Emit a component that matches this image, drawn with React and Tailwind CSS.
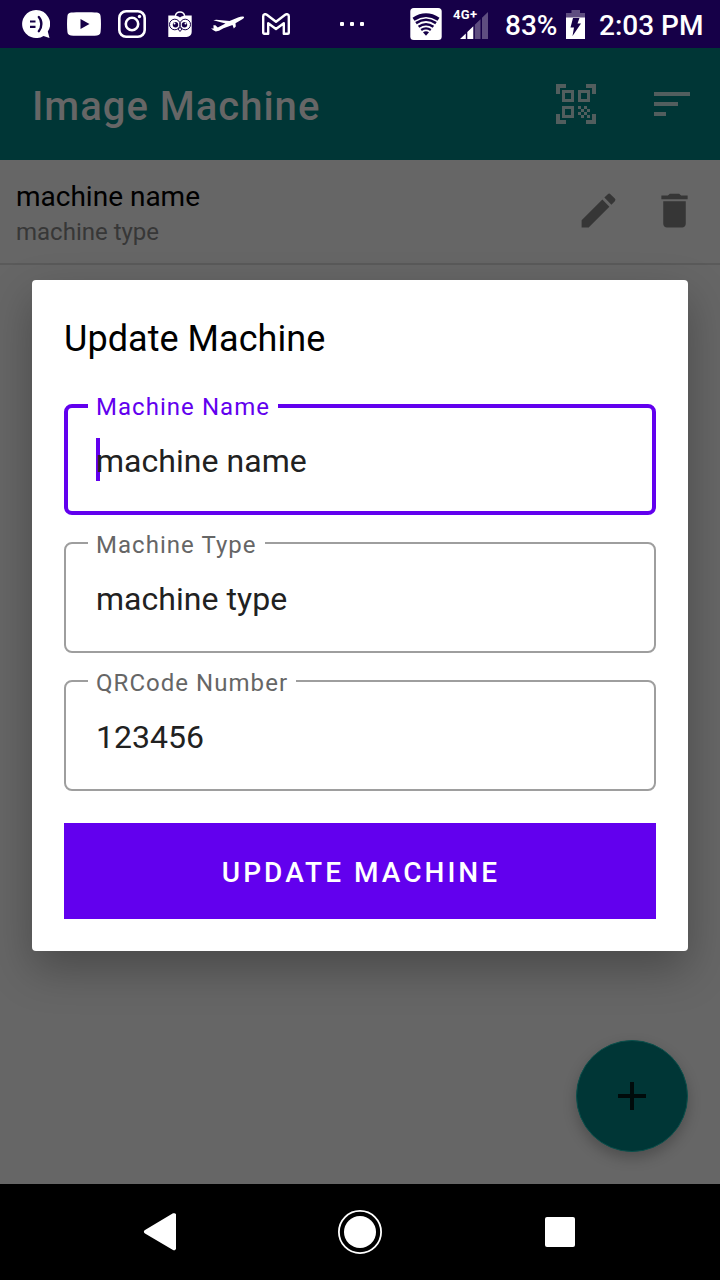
import React from "react";

const FaceIcon = () => (
  <svg width="28" height="28" viewBox="0 0 28 28">
    <path d="M14 0a14 14 0 1 0 7.500 25.900L27.500 28l-1.700-6.400A14 14 0 0 0 14 0z" fill="#fff" />
    <path d="M8 11.500h5.500M8 16.800h5.500" stroke="#160048" strokeWidth="2.200" />
    <path d="M16.800 7c3.400 3.600 3.400 10.400 0 14.200" stroke="#160048" strokeWidth="2.400" fill="none" strokeLinecap="round" />
  </svg>
);

const VideoIcon = () => (
  <svg width="34" height="24" viewBox="0 0 34 24">
    <path d="M4 .6C9 0 25 0 30 .6c2.500.3 3.400 1.600 3.600 3.700.500 5 .500 10.400 0 15.400-.2 2.100-1.100 3.400-3.600 3.700-5 .6-21 .6-26 0C1.500 23.100.600 21.800.400 19.700c-.5-5-.5-10.400 0-15.400C.600 2.200 1.500.900 4 .6z" fill="#fff" />
    <path d="M13.500 7v10l9-5z" fill="#160048" />
  </svg>
);

const CameraIcon = () => (
  <svg width="28" height="28" viewBox="0 0 28 28" fill="none" stroke="#fff" strokeWidth="2.600">
    <rect x="1.300" y="1.300" width="25.400" height="25.400" rx="6.800" />
    <circle cx="14" cy="14" r="6.200" />
    <circle cx="21.500" cy="6.500" r="1.700" fill="#fff" stroke="none" />
  </svg>
);

const OwlIcon = () => (
  <svg width="24" height="28" viewBox="0 0 24 28">
    <path d="M7.300 6a4.800 5 0 0 1 9.400 0" fill="none" stroke="#fff" strokeWidth="1.400" />
    <path d="M.3 5.500h6C9 5.500 11 6.500 12 7.500c1-1 3-2 5.700-2h6v16.500a5 5 0 0 1-5 5H.3z" fill="#fff" />
    <g fill="none" stroke="#160048" strokeWidth="1">
      <circle cx="6.800" cy="14.500" r="5.300" />
      <circle cx="17.200" cy="14.500" r="5.300" />
      <path d="M10 19l2-1.500 2 1.500-2 2.500z" />
    </g>
    <circle cx="7.500" cy="14.800" r="2.700" fill="#160048" />
    <circle cx="16.500" cy="14.800" r="2.700" fill="#160048" />
    <circle cx="6.500" cy="13.500" r="1" fill="#fff" />
    <circle cx="17.500" cy="13.500" r="1" fill="#fff" />
  </svg>
);

const PlaneIcon = () => (
  <svg width="34" height="16" viewBox="0 0 34 16" fill="#fff">
    <path d="M33 .9c.5.900-1.200 2.200-3 3L24.500 7.200l.3 3.300-2 2-1.300-3.500-9 3.300-4.500 2.500-3.200.7-2-.9-2.800-2.200 2.600.200-.2-3.300h2l2.400 2.300L14.500 7.500 2.300 4.200l3-.5L18.500 5 27 1.500C29.500.500 32 .100 33 .9z" />
  </svg>
);

const MailIcon = () => (
  <svg width="28" height="22" viewBox="0 0 28 22" fill="none" stroke="#fff" strokeWidth="2.400" strokeLinejoin="round">
    <path d="M1.200 3.200C1.200 1.300 3.200.600 4.800 1.800L14 8.800l9.200-7c1.600-1.200 3.600-.5 3.600 1.400V19.800a1 1 0 0 1-1 1h-4V10.200L14 16l-7.800-5.800v10.600h-4a1 1 0 0 1-1-1z" />
  </svg>
);

const WifiIcon = () => (
  <svg width="32" height="32" viewBox="0 0 32 32">
    <rect x=".3" width="31.400" height="32" rx="3.500" fill="#fff" />
    <g fill="none" stroke="#160048">
      <path d="M3.500 11.200Q16 3.200 28.500 11.200" strokeWidth="3.600" />
      <path d="M6 15.200q10-6.800 20 0" strokeWidth="2.600" />
      <path d="M8.600 18.800q7.400-5.200 14.800 0" strokeWidth="2.500" />
      <path d="M11.200 22q4.800-3.400 9.600 0" strokeWidth="2.200" />
    </g>
    <path d="M13 24.300q3-2 6 0L16 27.700z" fill="#160048" />
  </svg>
);

const SignalIcon = () => (
  <svg width="28" height="27" viewBox="0 0 28 27">
    <path d="M0 27 5.800 21.400V27zM7.300 20l6-5.800V27h-6z" fill="#fff" />
    <path d="M14.800 12.800l5.700-5.600V27h-5.700zM22 5.800 28 0v27h-6z" fill="#5e4d80" />
  </svg>
);

const BatteryIcon = () => (
  <svg width="19" height="29" viewBox="0 0 19 29">
    <path d="M0 3h5.500V0h8.500v3h5v5H0z" fill="#5e4d80" />
    <path d="M0 7.500h19V29H0z" fill="#fff" />
    <path d="M7 8h6.500L11.500 13.500H15L6.500 26l1.500-8.500H4.500z" fill="#160048" />
  </svg>
);

const StatusBar = () => (
  <div className="flex h-12 items-center bg-[#160048] pl-3 text-white">
    {[FaceIcon, VideoIcon, CameraIcon, OwlIcon, PlaneIcon, MailIcon].map((Icon, i) => (
      <div key={i} className="flex w-12 justify-center">
        <Icon />
      </div>
    ))}
    <div className="ml-10 flex w-6 gap-1.5">
      <span className="size-1 rounded-[1px] bg-white" />
      <span className="size-1 rounded-[1px] bg-white" />
      <span className="size-1 rounded-[1px] bg-white" />
    </div>
    <div className="ml-[46px]">
      <WifiIcon />
    </div>
    <div className="relative ml-[18px] mt-0.5">
      <span className="absolute -left-[7px] -top-[4px] text-[13px] leading-[14px] font-bold tracking-[0.4px]">4G+</span>
      <SignalIcon />
    </div>
    <span className="ml-[17px] w-[53px] whitespace-nowrap pt-1 text-[28px] leading-8 font-medium">83%</span>
    <div className="ml-[8px]">
      <BatteryIcon />
    </div>
    <span className="ml-[14px] whitespace-nowrap pt-1 text-[28px] leading-8 font-medium">2:03 PM</span>
  </div>
);

const AppBar = () => (
  <header className="flex h-28 items-center bg-[#003636] pl-8 pr-6">
    <h1 className="flex-1 pt-1.5 text-[40px] leading-[48px] font-medium tracking-[1px] text-[#666666]">Image Machine</h1>
    <svg className="size-12 fill-[#525e5e]" viewBox="0 0 24 24">
      <path d="M9.500,6.500v3h-3v-3H9.500 M11,5H5v6h6V5L11,5z M9.500,14.500v3h-3v-3H9.500 M11,13H5v6h6V13L11,13z M17.500,6.500v3h-3v-3H17.500 M19,5h-6v6h6V5L19,5z M13,13h1.500v1.500H13V13z M14.500,14.500H16V16h-1.500V14.500z M16,13h1.500v1.500H16V13z M13,16h1.500v1.500H13V16z M14.500,17.500H16V19h-1.500V17.500z M16,16h1.500v1.500H16V16z M17.500,14.500H19V16h-1.500V14.500z M17.500,17.500H19V19h-1.500V17.500z M22,7h-2V4h-3V2h5V7z M22,22v-5h-2v3h-3v2H22z M2,22h5v-2H4v-3H2V22z M2,2v5h2V4h3V2H2z" />
    </svg>
    <svg className="ml-12 size-12 fill-[#525e5e]" viewBox="0 0 24 24">
      <path d="M3 18h6v-2H3v2zM3 6v2h18V6H3zm0 7h12v-2H3v2z" />
    </svg>
  </header>
);

const MachineRow = () => (
  <div className="flex h-[105px] items-center border-b-2 border-[#5a5a5a] pl-4 pr-[23.500px]">
    <div className="flex-1 pt-1">
      <p className="text-[28px] leading-9 text-black">machine name</p>
      <p className="text-[24px] leading-[34px] text-[#373737]">machine type</p>
    </div>
    <svg className="-mt-[2px] size-[45px] fill-[#363636]" viewBox="0 0 24 24">
      <path d="M3 17.250V21h3.750L17.810 9.940l-3.750-3.750L3 17.250zM20.710 7.040a1 1 0 0 0 0-1.410l-2.340-2.340a1 1 0 0 0-1.410 0l-1.830 1.830 3.750 3.750 1.830-1.830z" />
    </svg>
    <svg className="-mt-[2px] ml-[31px] size-[45px] fill-[#363636]" viewBox="0 0 24 24">
      <path d="M6 19c0 1.100.900 2 2 2h8c1.100 0 2-.9 2-2V7H6v12zM19 4h-3.500l-1-1h-5l-1 1H5v2h14V4z" />
    </svg>
  </div>
);

const Field = ({ label, value, focused }) => (
  <div
    className={
      focused
        ? "relative flex h-[111px] items-center rounded-lg border-4 border-[#6200ee] pl-7"
        : "relative flex h-[111px] items-center rounded-lg border-2 border-[#9e9e9e] pl-[30px]"
    }
  >
    <span
      className={
        focused
          ? "absolute -top-[15px] left-5 bg-white px-2 text-[24px] leading-7 tracking-[1.040px] text-[#6200ee]"
          : "absolute -top-[13px] left-[22px] bg-white px-2 text-[24px] leading-7 tracking-[1.040px] text-[#666666]"
      }
    >
      {label}
    </span>
    {focused && <span className="-mr-1 h-[43px] w-1 bg-[#6200ee]" />}
    <span className="relative pt-0.5 text-[32px] leading-10 tracking-[0.040px] text-[#212121]">{value}</span>
  </div>
);

const UpdateDialog = () => (
  <section className="absolute left-8 right-8 top-[280px] h-[671px] rounded bg-white px-8 pt-9 shadow-[0_18px_44px_rgba(0,0,0,0.28)]">
    <h2 className="text-[36px] leading-[46px] tracking-[0.050px] text-black">Update Machine</h2>
    <div className="mt-[42px] flex flex-col gap-[27px]">
      <Field label="Machine Name" value="machine name" focused />
      <Field label="Machine Type" value="machine type" />
      <Field label="QRCode Number" value="123456" />
    </div>
    <button className="mt-8 block h-24 w-full bg-[#6200ee] pl-[2px] pt-1 text-[28px] leading-8 font-medium tracking-[3.040px] text-white">
      UPDATE MACHINE
    </button>
  </section>
);

const NavBar = () => (
  <nav className="flex h-24 items-center justify-between bg-black px-[136px]">
    <svg width="48" height="48" viewBox="0 0 48 48">
      <path d="M38 5.200a2 2 0 0 1 2 1v34.500a2 2 0 0 1-3 1.300L9 25.500a2 2 0 0 1 0-3.600L37 5.300z" fill="#fff" />
    </svg>
    <svg width="48" height="48" viewBox="0 0 48 48">
      <circle cx="24" cy="24" r="21.100" fill="none" stroke="#fff" strokeWidth="1.800" />
      <circle cx="24" cy="24" r="16" fill="#fff" />
    </svg>
    <svg width="48" height="48" viewBox="0 0 48 48">
      <rect x="9" y="9" width="30" height="30" rx="2" fill="#fff" />
    </svg>
  </nav>
);

export default function App() {
  return (
    <div className="relative flex h-[1280px] w-[720px] flex-col overflow-hidden bg-[#666666] font-[Roboto,sans-serif]">
      <StatusBar />
      <AppBar />
      <main className="flex-1">
        <MachineRow />
      </main>
      <button className="absolute left-[576px] top-[1040px] flex size-28 items-center justify-center rounded-full border border-[#0a4f4b] bg-[#003636] shadow-[0_6px_14px_rgba(0,0,0,0.24)]">
        <svg className="size-12 fill-[#000b0b]" viewBox="0 0 24 24">
          <path d="M19 13h-6v6h-2v-6H5v-2h6V5h2v6h6v2z" />
        </svg>
      </button>
      <UpdateDialog />
      <NavBar />
    </div>
  );
}
